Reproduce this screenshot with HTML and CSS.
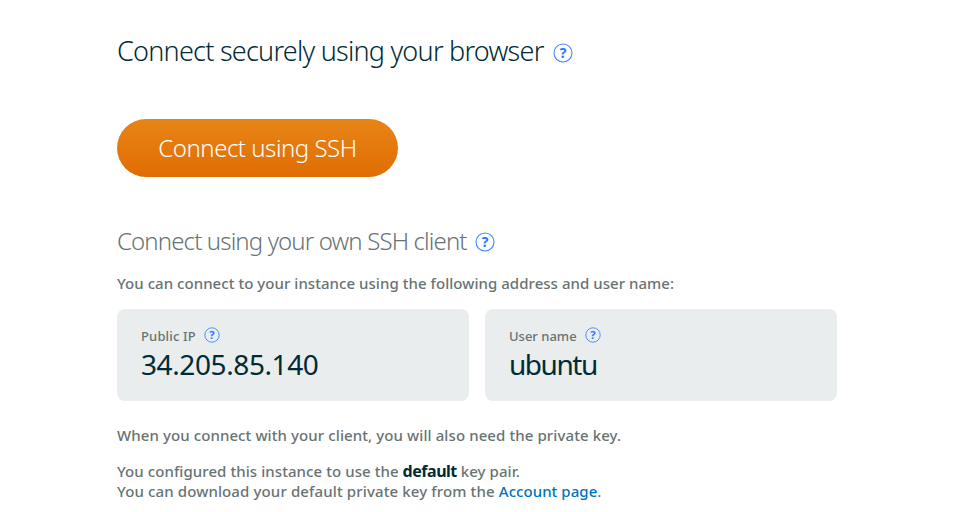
FILE: index.html
```
<!DOCTYPE html>
<html lang="en">
<head>
<meta charset="utf-8">
<title>Connect</title>
<link rel="stylesheet" href="styles.css">
</head>
<body>
<main class="page">
<h1 class="title">Connect securely using your browser<svg class="help" viewBox="0 0 20 20"><circle cx="10" cy="10" r="9"/><text x="10" y="15">?</text></svg></h1>
<button class="ssh">Connect using SSH</button>
<h2 class="subtitle">Connect using your own SSH client<svg class="help" viewBox="0 0 20 20"><circle cx="10" cy="10" r="9"/><text x="10" y="15">?</text></svg></h2>
<p class="intro">You can connect to your instance using the following address and user name:</p>
<div class="cards">
<section class="card"><div class="label ip">Public IP<svg class="help small" viewBox="0 0 20 20"><circle cx="10" cy="10" r="9"/><text x="10" y="15">?</text></svg></div><div class="value">34.205.85.140</div></section>
<section class="card"><div class="label">User name<svg class="help small" viewBox="0 0 20 20"><circle cx="10" cy="10" r="9"/><text x="10" y="15">?</text></svg></div><div class="value user">ubuntu</div></section>
</div>
<p class="note">When you connect with your client, you will also need the private key.</p>
<p class="keys">You configured this instance to use the <b>default</b> key pair.</p>
<p class="download">You can download your default private key from the <a>Account page</a>.</p>
</main>
</body>
</html>
```

FILE: styles.css
```
* { box-sizing: border-box; }
body { margin: 0; background: #fff; color: #687373; font: 500 15px/20px "Noto Sans", sans-serif; }
.page { width: 720px; margin-left: 117px; padding-top: 31px; }
h1, h2, p { margin: 0; }
.title, .subtitle { display: flex; align-items: center; height: 40px; gap: 9px; white-space: nowrap; }
.title { color: #002b36; font: 350 27px/40px "Noto Sans", sans-serif; letter-spacing: -.75px; }
.help { width: 20px; height: 20px; fill: none; stroke: #3f86ff; stroke-width: 1.1; flex: none; letter-spacing: 0; }
.title .help { position: relative; top: 2px; }
.help text { fill: #2878ff; stroke: none; font: 700 14px "Noto Sans", sans-serif; text-anchor: middle; }
.ssh { display: block; margin: 48px 0 44px; width: 281px; height: 58px; border: 0; border-radius: 29px; background: linear-gradient(#e88516, #e06d04); color: #fff; font: 300 24px/58px "Noto Sans", sans-serif; letter-spacing: -.48px; padding: 0; }
.subtitle { color: #687373; font: 300 24px/40px "Noto Sans", sans-serif; letter-spacing: -.87px; gap: 8px; }
.subtitle .help { position: relative; top: 1px; }
.intro { margin-top: 12px; letter-spacing: .045px; }
.cards { display: grid; grid-template-columns: 1fr 1fr; gap: 16px; margin-top: 16px; }
.card { height: 92px; padding: 17px 24px; border-radius: 8px; background: #e9eded; }
.label { display: flex; align-items: center; gap: 8px; font-size: 13px; line-height: 20px; }
.ip { letter-spacing: .15px; }
.small { width: 16px; height: 16px; position: relative; top: -1px; }
.value { font-size: 28px; font-weight: 450; line-height: 36px; color: #002b36; letter-spacing: -.4px; }
.user { letter-spacing: -1.45px; }
.note { margin-top: 24px; letter-spacing: .095px; }
.keys { margin-top: 16px; letter-spacing: .07px; }
.download { letter-spacing: .125px; }
b { color: #002b36; font-size: 16px; line-height: 1; letter-spacing: -.48px; }
a { color: #0073bb; letter-spacing: .05px; }
```
